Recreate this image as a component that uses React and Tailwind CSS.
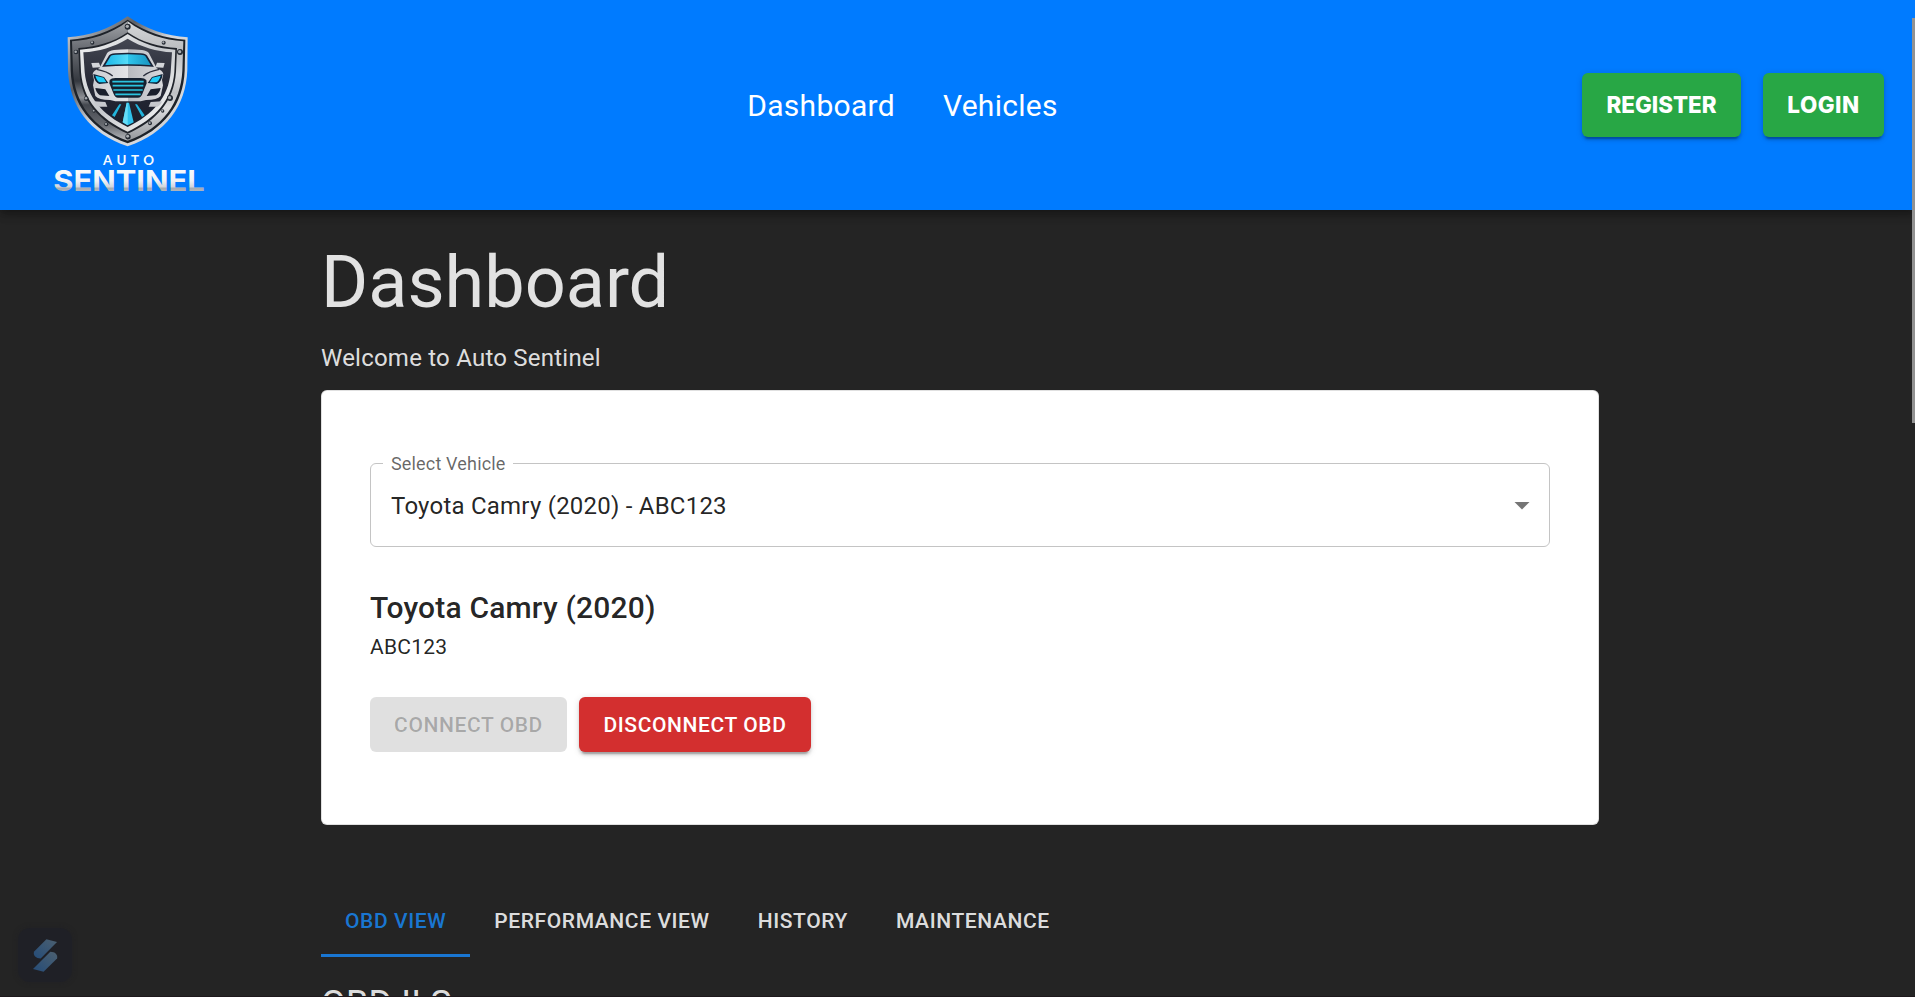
import React from 'react';

const Bolt = ({ x, y, r = 7 }) => (
  <g>
    <circle cx={x} cy={y} r={r} fill="#242a33" />
    <circle cx={x - 1} cy={y - 1} r={r * 0.55} fill="#a9adb2" />
  </g>
);

function Logo() {
  return (
    <svg width="180" height="210" viewBox="0 0 540 630" className="shrink-0 overflow-visible" aria-label="Auto Sentinel">
      <defs>
        <linearGradient id="rim" x1="0" y1="0" x2="1" y2="1">
          <stop offset="0" stopColor="#e3e5e8" />
          <stop offset=".3" stopColor="#5b5f66" />
          <stop offset=".5" stopColor="#d4d6da" />
          <stop offset=".8" stopColor="#d5d7da" />
          <stop offset="1" stopColor="#777b82" />
        </linearGradient>
        <linearGradient id="plateL" x1="0" y1="0" x2="0" y2="1">
          <stop offset="0" stopColor="#a2a5a9" />
          <stop offset=".2" stopColor="#6f7278" />
          <stop offset=".5" stopColor="#34383f" />
          <stop offset=".64" stopColor="#8e9196" />
          <stop offset=".7" stopColor="#44484f" />
          <stop offset=".86" stopColor="#64676d" />
          <stop offset="1" stopColor="#b6b8bc" />
        </linearGradient>
        <linearGradient id="plateR" x1="0" y1="0" x2="0" y2="1">
          <stop offset="0" stopColor="#d6d8da" />
          <stop offset=".25" stopColor="#b9bbbe" />
          <stop offset=".45" stopColor="#d9dadc" />
          <stop offset=".6" stopColor="#bfc1c4" />
          <stop offset=".72" stopColor="#dedfe1" />
          <stop offset="1" stopColor="#94979b" />
        </linearGradient>
        <linearGradient id="inner" x1="0" y1="0" x2="1" y2="1">
          <stop offset="0" stopColor="#f4f5f5" />
          <stop offset=".5" stopColor="#c5c8cc" />
          <stop offset="1" stopColor="#ffffff" />
        </linearGradient>
        <linearGradient id="field" x1="0" y1="0" x2="0" y2="1">
          <stop offset="0" stopColor="#444752" />
          <stop offset=".5" stopColor="#262936" />
          <stop offset="1" stopColor="#1a1e2c" />
        </linearGradient>
        <linearGradient id="glass" x1="0" y1="0" x2="1" y2="0">
          <stop offset="0" stopColor="#19b5e6" />
          <stop offset=".5" stopColor="#55dcf8" />
          <stop offset=".5" stopColor="#2fc6ec" />
          <stop offset="1" stopColor="#1690bd" />
        </linearGradient>
        <linearGradient id="body" x1="0" y1="0" x2="1" y2="0">
          <stop offset="0" stopColor="#cbccd1" />
          <stop offset=".5" stopColor="#e3e4e7" />
          <stop offset=".5" stopColor="#b8babf" />
          <stop offset="1" stopColor="#d8d9dd" />
        </linearGradient>
        <linearGradient id="metal" x1="0" y1="0" x2="0" y2="1">
          <stop offset="0" stopColor="#ffffff" />
          <stop offset=".5" stopColor="#eef1f5" />
          <stop offset=".68" stopColor="#cfd3d9" />
          <stop offset=".7" stopColor="#a3aab3" />
          <stop offset="1" stopColor="#c9cdd3" />
        </linearGradient>
      </defs>
      <path d="M263 49C318 88 380 108 443 112L442 210C438 318 378 400 263 439C148 400 88 318 84 210L83 112C146 108 208 88 263 49Z" fill="url(#rim)" />
      <path d="M263 59C318 97 376 115 436 119L434 212C430 312 373 390 263 430C153 390 96 312 92 212L90 119C150 115 208 97 263 59Z" fill="#1d2229" />
      <path d="M263 64V422C157 384 104 308 99 212L96 124C155 120 210 104 263 64Z" fill="url(#plateL)" />
      <path d="M263 64V422C369 384 422 308 427 212L430 124C371 120 316 104 263 64Z" fill="url(#plateR)" />
      <path d="M263 97C307 128 358 141 411 144L408 216C401 306 350 362 263 401C176 362 125 306 118 216L115 144C168 141 219 128 263 97Z" fill="#20242b" />
      <path d="M263 102C307 132 356 146 406 149L403 216C396 302 346 356 263 395C180 356 130 302 123 216L120 149C170 146 219 132 263 102Z" fill="url(#inner)" />
      <path d="M263 116C305 142 350 154 396 157L392 216C385 292 340 343 263 381C186 343 141 292 134 216L130 157C176 154 221 142 263 116Z" fill="url(#field)" />
      <Bolt x={263} y={80} r={9} />
      <Bolt x={157} y={128} r={6} />
      <Bolt x={371} y={128} r={6} />
      <Bolt x={108} y={156} />
      <Bolt x={420} y={156} r={9} />
      <Bolt x={139} y={296} />
      <Bolt x={390} y={294} r={9} />
      <Bolt x={162} y={333} r={5} />
      <Bolt x={368} y={333} r={5} />
      <Bolt x={199} y={373} r={6} />
      <Bolt x={330} y={370} r={6} />
      <Bolt x={264} y={410} r={8} />

      <path d="M162 304L196 306L202 320H176Q165 316 162 304ZM366 304L332 306L326 320H352Q363 316 366 304Z" fill="#c6c8cd" />
      <path d="M154 189L177 188L182 202L158 203ZM374 189L351 188L346 202L370 203Z" fill="#d3d5d9" />
      <path d="M178 205L201 160Q206 152 222 150Q264 146 306 150Q322 152 327 160L350 205Q368 212 370 222L366 240L369 256L362 288Q352 300 318 300L302 304H226L210 300Q176 300 166 288L159 256L162 240L158 222Q160 212 178 205Z" fill="url(#body)" />
      <path d="M191 198L209 168Q212 163 226 162Q264 159 302 162Q316 163 319 168L337 198Q264 192 191 198Z" fill="url(#glass)" stroke="#182236" strokeWidth="5" />
      <path d="M170 208Q202 214 218 228M358 208Q326 214 310 228" fill="none" stroke="#2b2f3d" strokeWidth="4" />
      <path d="M160 222L192 231L205 249L178 252Q163 246 160 222ZM368 222L336 231L323 249L350 252Q365 246 368 222Z" fill="#112338" />
      <path d="M166 227L191 233L199 247L179 247Q170 242 166 227ZM362 227L337 233L329 247L349 247Q358 242 362 227Z" fill="#1fcbf5" />
      <path d="M209 240Q214 234 226 234H302Q314 234 319 240L320 250L307 282Q303 293 294 293H234Q225 293 221 282L208 250Z" fill="#15202f" />
      <path d="M217 245H311M218 257H310M220 270H308M226 283H302" stroke="#2bc3df" strokeWidth="5" />
      <path d="M166 264L196 268L208 288L180 286Q169 280 166 264ZM362 264L332 268L320 288L348 286Q359 280 362 264Z" fill="#1a1f2c" />
      <path d="M260 308H267L281 367L263 376L248 367Z" fill="#2fc1ec" />
      <path d="M263 308V376L248 367L260 308Z" fill="#64dcf8" />
      <path d="M238 313L244 313L224 351L216 346ZM285 313L291 313L314 346L306 351Z" fill="#22b4dc" />

      <text x="189" y="494" textLength="153" fontFamily="Lato, sans-serif" fontWeight="700" fontSize="40" fill="#f5faff">AUTO</text>
      <g transform="translate(40 574) scale(1.29 1)">
        <text x="0" y="0" textLength="352" lengthAdjust="spacingAndGlyphs" fontFamily="Inter, sans-serif" fontWeight="700" fontSize="87" fill="url(#metal)">SENTINEL</text>
      </g>
    </svg>
  );
}

const SHADOW = 'shadow-[0_4.5px_1.5px_-3px_rgba(0,0,0,0.2),0_3px_3px_0_rgba(0,0,0,0.14),0_1.5px_7.5px_0_rgba(0,0,0,0.12)]';

function AuthButton({ children, className }) {
  return (
    <button className={`flex h-16 items-center justify-center rounded-[6px] bg-[#28a745] font-['Inter',sans-serif] text-[22.4px] font-extrabold text-white ${SHADOW} ${className}`}>
      {children}
    </button>
  );
}

const tabs = ['OBD View', 'Performance View', 'History', 'Maintenance'];

export default function App() {
  return (
    <div className="relative flex h-[997px] flex-col overflow-hidden bg-[#242424] font-['Roboto',sans-serif] text-white/87">
      <header className="relative flex h-[210px] shrink-0 items-center justify-between bg-[#007bff] pr-[31px] pl-10 text-white shadow-[0_3px_6px_-1.5px_rgba(0,0,0,0.2),0_6px_7.5px_0_rgba(0,0,0,0.14),0_1.5px_15px_0_rgba(0,0,0,0.12)]">
        <Logo />
        <nav className="ml-[3px] flex gap-12 pt-px text-[30px] leading-[48px] tracking-[0.0094em]">
          <a>Dashboard</a>
          <a>Vehicles</a>
        </nav>
        <div className="flex justify-end gap-[22px]">
          <AuthButton className="w-[159px]">REGISTER</AuthButton>
          <AuthButton className="w-[121px] tracking-[0.5px]">LOGIN</AuthButton>
        </div>
      </header>

      <main className="ml-[321px] flex w-[1278px] shrink-0 flex-col pt-[31px]">
        <h1 className="text-[72px] leading-[84px] font-normal">Dashboard</h1>
        <p className="mt-[15px] text-[24px] leading-9 tracking-[0.00938em]">Welcome to Auto Sentinel</p>

        <section className="mt-[14px] flex h-[435px] flex-col rounded-[6px] border border-black/12 bg-white px-12 pt-[72px] text-black/87">
          <div className="relative flex h-[84px] shrink-0 items-center justify-between rounded-[6px] border border-[#c4c4c4] pr-[9px] pl-5">
            <span className="absolute -top-[12px] left-[12px] bg-white pr-[7px] pl-2 text-[18px] leading-6 tracking-[0.00938em] text-black/60">Select Vehicle</span>
            <span className="pt-[2px] text-[24px] tracking-[0.00938em]">Toyota Camry (2020) - ABC123</span>
            <svg viewBox="0 0 24 24" className="size-9 text-black/54" fill="currentColor"><path d="M7 10l5 5 5-5z" /></svg>
          </div>
          <h2 className="mt-[37px] text-[30px] leading-[48px] font-medium tracking-[0.006em]">Toyota Camry (2020)</h2>
          <p className="text-[21px] leading-[30px] tracking-[0.01071em]">ABC123</p>
          <div className="mt-[35px] flex gap-3 text-[21px] font-medium tracking-[0.02857em]">
            <button className="h-[55px] w-[197px] rounded-[6px] bg-black/12 pt-[2px] text-black/26">CONNECT OBD</button>
            <button className={`h-[55px] w-[232px] rounded-[6px] bg-[#d32f2f] pt-[2px] text-white ${SHADOW}`}>DISCONNECT OBD</button>
          </div>
        </section>

        <div className="mt-[59px] flex text-[21px] font-medium tracking-[0.02857em] uppercase">
          {tabs.map((t, i) => (
            <div key={t} className={i === 0 ? 'flex h-[73px] items-center border-b-3 border-[#1976d2] px-6 pt-[5px] text-[#1976d2]' : 'flex h-[70px] items-center px-6 pt-[5px]'}>
              {t}
            </div>
          ))}
        </div>
        <h2 className="mt-[23px] text-[36px] leading-[48px] tracking-[0.004em]">OBD II Scanner</h2>
      </main>

      <div className="absolute top-[928px] left-[18px] flex size-[54px] items-center justify-center rounded-[12px] bg-[#1f2026] shadow-[0_0_4px_1px_rgba(31,32,38,0.5)]">
        <svg width="25" height="33" viewBox="0 0 26 34">
          <defs>
            <linearGradient id="badge" x1="0" y1="1" x2="1" y2="0">
              <stop offset="0" stopColor="#254c78" />
              <stop offset="1" stopColor="#4c6070" />
            </linearGradient>
          </defs>
          <path d="M14 0L25 3L8 20C3 20 0 17 1 13Z" fill="url(#badge)" />
          <path d="M0 31L18 13C23 13 26 16 25 20L11 34Z" fill="url(#badge)" />
        </svg>
      </div>
      <div className="absolute top-[18px] right-0 h-[405px] w-[3px] bg-[#929292]" />
      <div className="absolute bottom-0 left-0 h-px w-full bg-[#1e181c]" />
    </div>
  );
}
